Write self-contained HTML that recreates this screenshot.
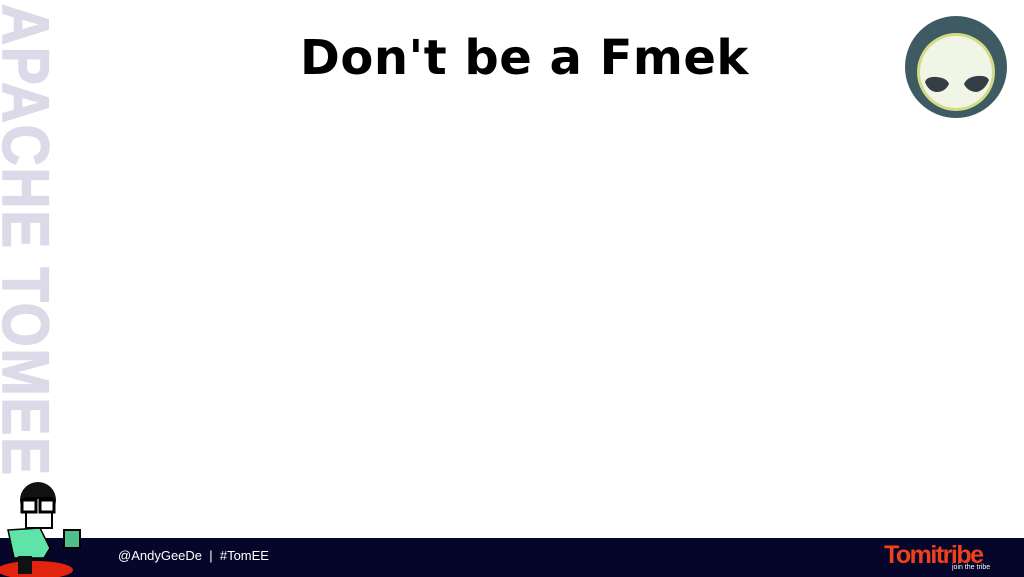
<!DOCTYPE html>
<html><head><style>
body{margin:0;width:1024px;height:577px;overflow:hidden;background:#fff;position:relative;font-family:"Liberation Sans",sans-serif}
.t{position:absolute;left:300px;top:30px;font-family:"DejaVu Sans",sans-serif;font-weight:bold;font-size:48px;letter-spacing:0.5px;color:#000;white-space:nowrap}
.v{position:absolute;left:50px;top:4px;transform-origin:0 0;transform:rotate(90deg) scaleX(0.86);white-space:nowrap;font-family:"Liberation Sans Narrow","Liberation Sans",sans-serif;font-weight:bold;font-size:66px;color:#dcdae8;letter-spacing:2px;line-height:49px;-webkit-text-stroke:1.5px #dcdae8}
.f{position:absolute;left:0;top:538px;width:1024px;height:39px;background:#05062a}
.h{position:absolute;left:118px;top:548px;color:#fff;font-size:13px}
.lg{position:absolute;left:884px;top:541px;color:#f0401c;font-weight:bold;font-size:25px;letter-spacing:-1.5px;font-family:"Liberation Sans Narrow","Liberation Sans",sans-serif}
.jt{position:absolute;left:952px;top:564px;color:#fff;font-size:7px}
</style></head><body>
<div class="v">APACHE TOMEE</div>
<div class="t">Don't be a Fmek</div>
<svg style="position:absolute;left:905px;top:16px" width="104" height="104">
<circle cx="51" cy="51" r="51" fill="#3e5a63"/>
<circle cx="51" cy="56" r="39" fill="#d4db86"/>
<circle cx="51" cy="56" r="36" fill="#f1f5e6"/>
<path d="M20 66 Q22 60 32 61 Q42 62 44 68 Q40 76 32 76 Q24 76 20 66Z" fill="#343e44"/>
<path d="M84 64 Q82 59 72 60 Q62 61 59 68 Q63 76 72 76 Q80 74 84 64Z" fill="#343e44"/>
</svg>
<div class="f"></div>
<svg style="position:absolute;left:0;top:478px" width="90" height="99">
<ellipse cx="35" cy="92" rx="38" ry="9" fill="#e2240f"/>
<circle cx="38" cy="22" r="18" fill="#111"/>
<rect x="26" y="20" width="26" height="30" fill="#fff" stroke="#000" stroke-width="2"/>
<rect x="22" y="22" width="14" height="12" fill="#fff" stroke="#000" stroke-width="3"/>
<rect x="40" y="22" width="14" height="12" fill="#fff" stroke="#000" stroke-width="3"/>
<path d="M8 52 L40 50 L50 70 L44 80 L14 80Z" fill="#5fe3a8" stroke="#000" stroke-width="1.5"/>
<rect x="18" y="78" width="14" height="18" fill="#111"/>
<rect x="64" y="52" width="16" height="18" fill="#4fc08b" stroke="#000" stroke-width="2"/>
</svg>
<div class="h">@AndyGeeDe &nbsp;| &nbsp;#TomEE</div>
<div class="lg">Tomitribe</div>
<div class="jt">join the tribe</div>
</body></html>
